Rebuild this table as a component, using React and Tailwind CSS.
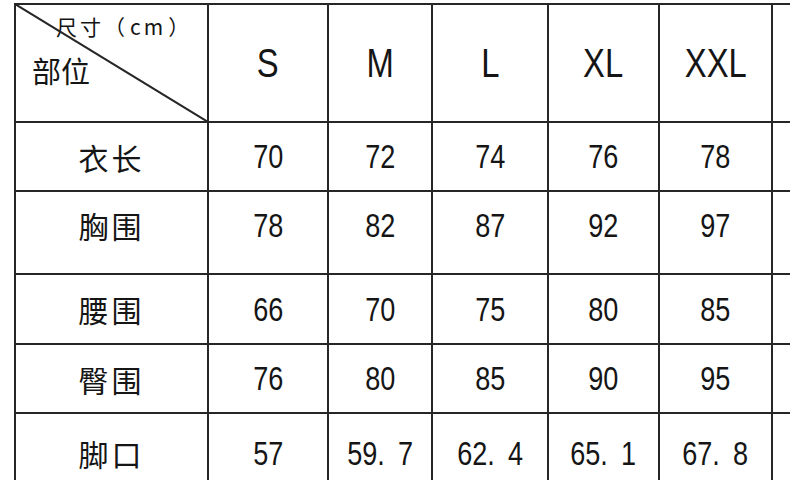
import React from 'react';

const SIZES = ['S', 'M', 'L', 'XL', 'XXL'];

const ROWS = [
  { label: '衣长', values: ['70', '72', '74', '76', '78'], pad: '' },
  { label: '胸围', values: ['78', '82', '87', '92', '97'], pad: 'pb-[15px]' },
  { label: '腰围', values: ['66', '70', '75', '80', '85'], pad: '' },
  { label: '臀围', values: ['76', '80', '85', '90', '95'], pad: '' },
  { label: '脚口', values: ['57', '59. 7', '62. 4', '65. 1', '67. 8'], pad: '' },
];

const cell = 'border-r-2 border-b-2 border-[#262626] flex items-center justify-center';
const sans = "font-['Liberation_Sans',Arial,sans-serif]";
const cjk = "font-['Noto_Sans_CJK_SC',sans-serif]";

const App = () => {
  return (
    <div className="w-[790px] h-[480px] overflow-hidden bg-white text-[#151515]">
      <div className="ml-[14px] mt-[3px] w-max grid grid-cols-[193px_120px_104px_116px_111px_113px_100px] grid-rows-[118px_69px_83px_70px_69px_80px] border-l-2 border-t-2 border-[#262626]">
        {/* header cell with diagonal */}
        <div className="relative border-r-2 border-b-2 border-[#262626]">
          <svg className="absolute -left-px -top-px w-[calc(100%+2px)] h-[calc(100%+2px)]" preserveAspectRatio="none">
            <line x1="0" y1="0" x2="100%" y2="100%" stroke="#262626" strokeWidth="2" />
          </svg>
          <div className={`flex flex-col ${cjk} leading-none`}>
            <span className="pl-[40px] pt-[11px] text-[21px] tracking-[3px]">尺寸（<span className="mx-[2px]">cm</span>）</span>
            <span className="pl-[16px] pt-[19px] text-[29px]">部位</span>
          </div>
        </div>
        {SIZES.map((s) => (
          <div key={s} className={`${cell} ${sans} text-[41px] leading-none`}>
            <span className="scale-x-[0.8]">{s}</span>
          </div>
        ))}
        <div className={cell}></div>

        {ROWS.map((row) => (
          <React.Fragment key={row.label}>
            <div className={`${cell} ${row.pad} ${cjk} text-[30px] leading-none tracking-[3px]`}>{row.label}</div>
            {row.values.map((v, i) => (
              <div key={i} className={`${cell} ${row.pad} ${sans} text-[33px] leading-none whitespace-pre [word-spacing:7px]`}>
                <span className="scale-x-[0.82]">{v}</span>
              </div>
            ))}
            <div className={cell}></div>
          </React.Fragment>
        ))}
      </div>
    </div>
  );
};

export default App;
